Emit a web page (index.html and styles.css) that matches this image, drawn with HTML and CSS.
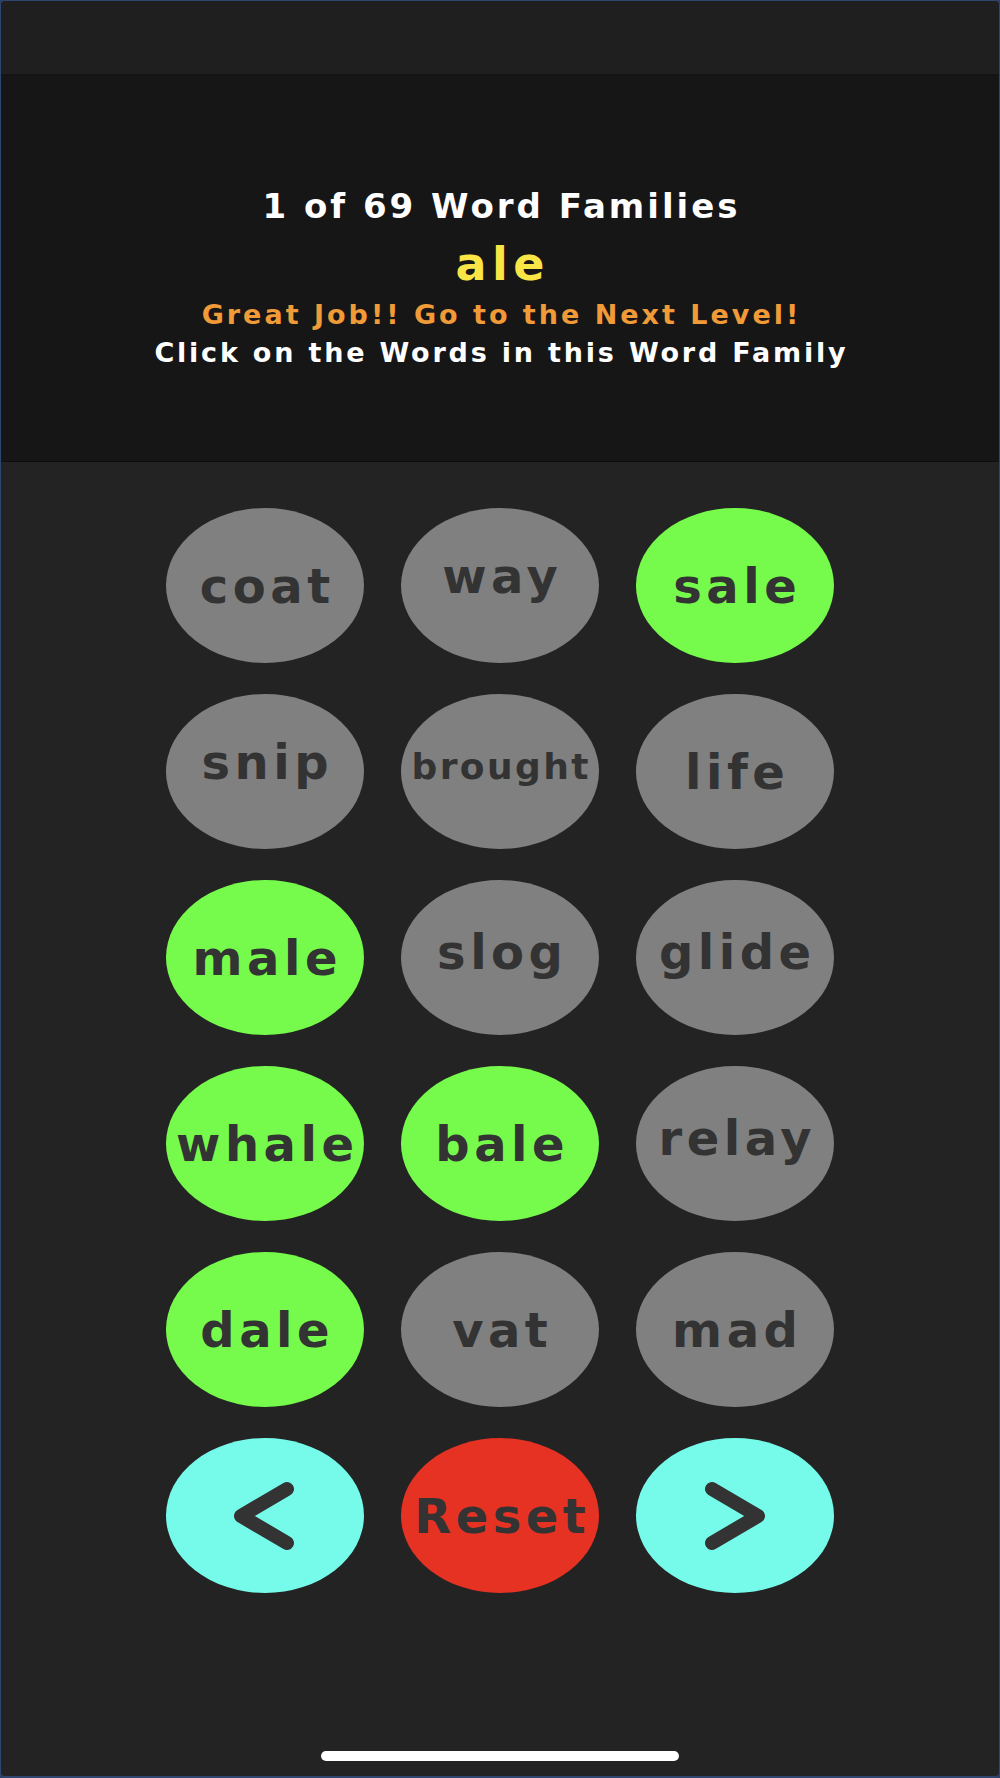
FILE: index.html
```html
<!DOCTYPE html>
<html lang="en">
<head>
<meta charset="utf-8">
<title>Word Families</title>
<link rel="stylesheet" href="styles.css">
</head>
<body>
<div class="device">
  <div class="topbar"></div>
  <header class="header">
    <div class="count">1 of 69 Word Families</div>
    <div class="family">ale</div>
    <div class="praise">Great Job!! Go to the Next Level!</div>
    <div class="instr">Click on the Words in this Word Family</div>
  </header>
  <main class="board">
    <div class="grid">
      <button class="oval gray">coat</button>
      <button class="oval gray dsc">way</button>
      <button class="oval green">sale</button>

      <button class="oval gray dsc">snip</button>
      <button class="oval gray small">brought</button>
      <button class="oval gray">life</button>

      <button class="oval green">male</button>
      <button class="oval gray dsc2">slog</button>
      <button class="oval gray dsc2">glide</button>

      <button class="oval green">whale</button>
      <button class="oval green">bale</button>
      <button class="oval gray dsc2">relay</button>

      <button class="oval green">dale</button>
      <button class="oval gray">vat</button>
      <button class="oval gray">mad</button>

      <button class="oval cyan icon" aria-label="Previous">
        <svg class="chev" width="66" height="76" viewBox="0 0 66 76"><polyline points="55,11 9,38 55,65"/></svg>
      </button>
      <button class="oval red">Reset</button>
      <button class="oval cyan icon" aria-label="Next">
        <svg class="chev" width="66" height="76" viewBox="0 0 66 76"><polyline points="10,11 56,38 10,65"/></svg>
      </button>
    </div>
    <div class="home-indicator"></div>
  </main>
</div>
</body>
</html>
```
FILE: styles.css
```css
html, body {
  margin: 0;
  padding: 0;
  background: #2c4168;
  overflow: hidden;
}

.device {
  width: 1000px;
  height: 1778px;
  box-sizing: border-box;
  border: 1px solid #2f4670;
  border-bottom-width: 2px;
  border-radius: 5px;
  overflow: hidden;
  background: #232323;
  display: flex;
  flex-direction: column;
  font-family: "DejaVu Sans", "Noto Sans", sans-serif;
  font-weight: 700;
}

.topbar {
  height: 73px;
  flex: none;
  background: #1f1f1f;
  border-bottom: 1px solid #131313;
}

.header {
  height: 387px;
  flex: none;
  box-sizing: border-box;
  background: #161616;
  border-bottom: 1px solid #0e0e0e;
  padding-top: 111px;
  display: flex;
  flex-direction: column;
  align-items: center;
  text-align: center;
}

.count {
  font-size: 34px;
  line-height: 40px;
  letter-spacing: 3px;
  padding-left: 3px;
  color: #ffffff;
  margin-bottom: 10px;
}

.family {
  font-size: 46px;
  line-height: 56px;
  letter-spacing: 5.5px;
  padding-left: 5.5px;
  color: #f9e546;
}

.praise {
  margin-top: 4px;
  font-size: 27px;
  line-height: 38px;
  letter-spacing: 3px;
  padding-left: 3px;
  color: #f09a38;
}

.instr {
  font-size: 27px;
  line-height: 38px;
  letter-spacing: 2.8px;
  padding-left: 2.8px;
  color: #ffffff;
}

.board {
  flex: 1;
  display: flex;
  flex-direction: column;
  align-items: center;
  padding-top: 46px;
}

.grid {
  display: grid;
  grid-template-columns: repeat(3, 198px);
  grid-auto-rows: 155px;
  column-gap: 37px;
  row-gap: 31px;
}

.oval {
  border: none;
  margin: 0;
  border-radius: 50%;
  display: flex;
  align-items: center;
  justify-content: center;
  box-sizing: border-box;
  padding: 0 0 0 4.5px;
  font-family: "DejaVu Sans", "Noto Sans", sans-serif;
  font-weight: 700;
  font-size: 48px;
  letter-spacing: 4.5px;
  color: #333333;
  white-space: nowrap;
}

.oval.dsc { padding-bottom: 20px; }
.oval.dsc2 { padding-bottom: 12px; }

.oval.small {
  font-size: 36px;
  letter-spacing: 2.4px;
  padding-left: 2.4px;
  padding-bottom: 10px;
}

.oval.icon { padding: 0; }

.gray { background: #808080; }
.green { background: #76fb4c; }
.cyan { background: #76fbeb; }
.red { background: #e63223; }

.chev polyline {
  fill: none;
  stroke: #333333;
  stroke-width: 14;
  stroke-linecap: round;
  stroke-linejoin: round;
}

.home-indicator {
  margin-top: 158px;
  width: 358px;
  height: 10px;
  border-radius: 5px;
  background: #ffffff;
}
```
